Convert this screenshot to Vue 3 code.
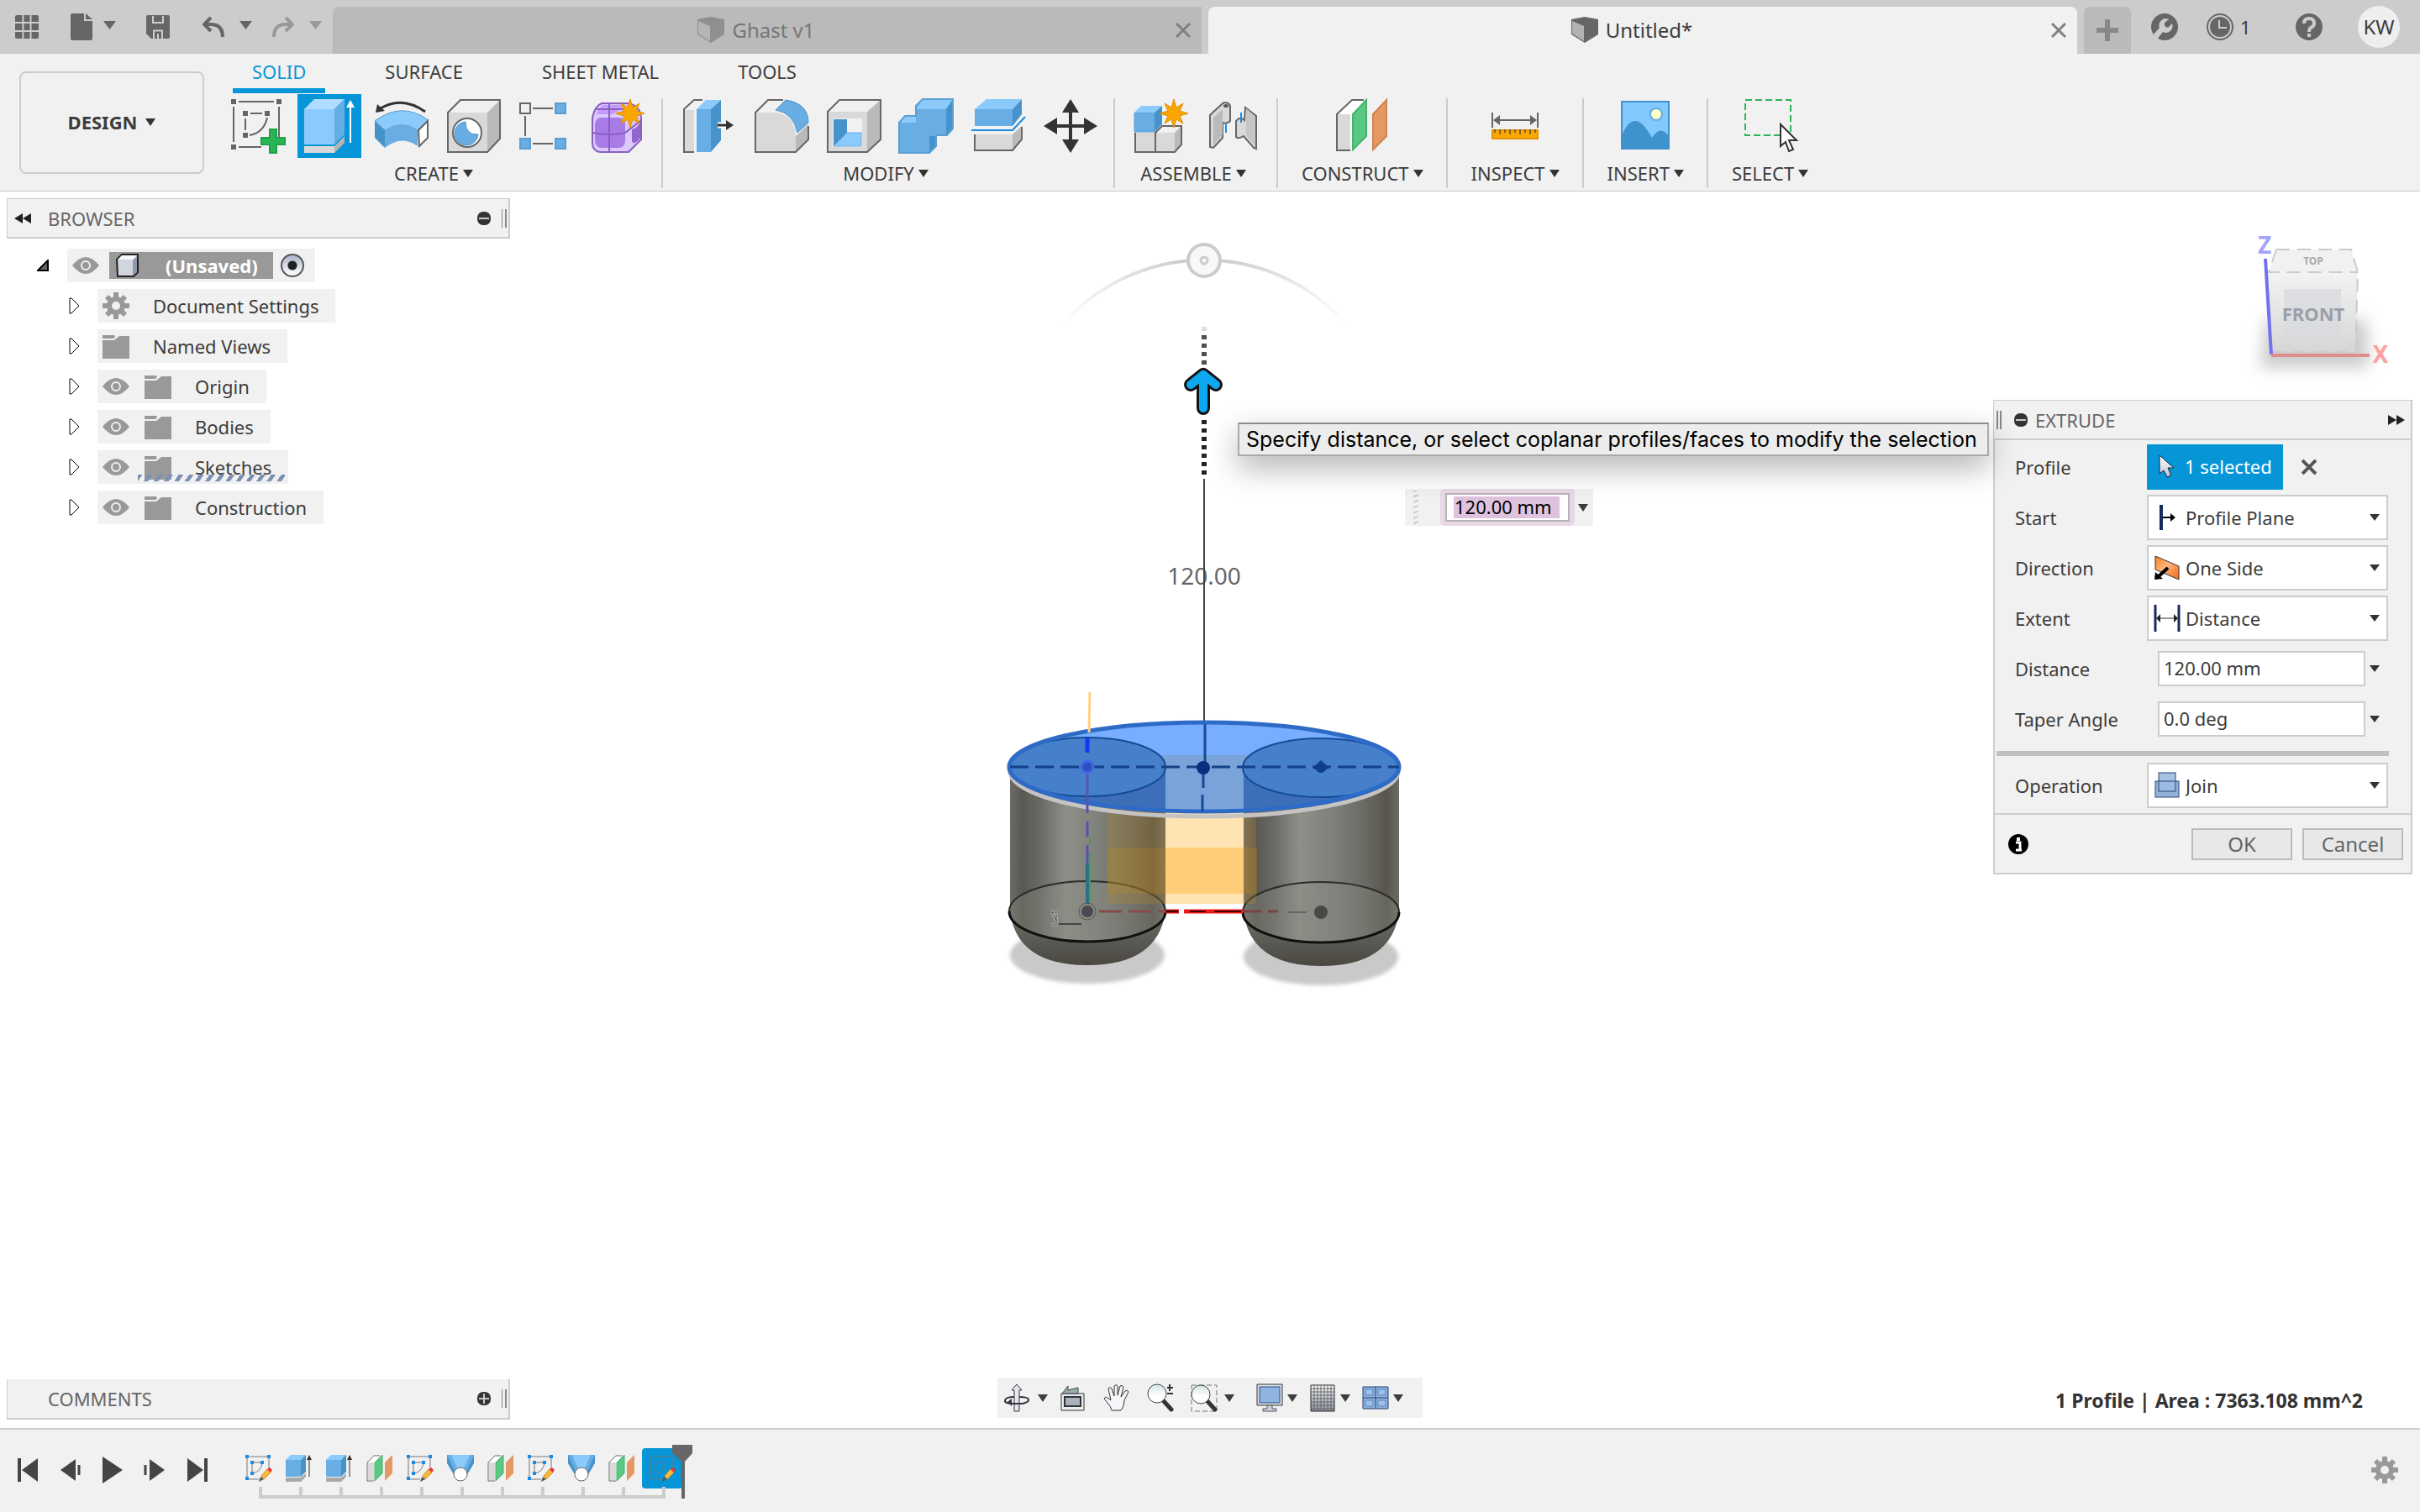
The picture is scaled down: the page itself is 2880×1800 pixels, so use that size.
<script setup>
import { ref } from 'vue'

const distance = ref('120.00 mm')
const taper = ref('0.0 deg')

const ribbonTabs = ['SOLID', 'SURFACE', 'SHEET METAL', 'TOOLS']
const activeTab = ref('SOLID')

const groups = [
  { label: 'CREATE', tools: ['sketch', 'extrude', 'revolve', 'hole', 'pattern', 'form'] },
  { label: 'MODIFY', tools: ['presspull', 'fillet', 'shell', 'combine', 'split', 'move'] },
  { label: 'ASSEMBLE', tools: ['component', 'joint'] },
  { label: 'CONSTRUCT', tools: ['plane'] },
  { label: 'INSPECT', tools: ['measure'] },
  { label: 'INSERT', tools: ['image'] },
  { label: 'SELECT', tools: ['select'] },
]

const nodes = [
  { label: 'Document Settings', icons: ['gear'] },
  { label: 'Named Views', icons: ['folder'] },
  { label: 'Origin', icons: ['eye', 'folder'] },
  { label: 'Bodies', icons: ['eye', 'folder'] },
  { label: 'Sketches', icons: ['eye', 'folder'], pending: true },
  { label: 'Construction', icons: ['eye', 'folder'] },
]

const selects = [
  { id: 'start', label: 'Start', value: 'Profile Plane', icon: 'fromplane' },
  { id: 'direction', label: 'Direction', value: 'One Side', icon: 'oneside' },
  { id: 'extent', label: 'Extent', value: 'Distance', icon: 'span' },
]

const playback = ['first', 'prev', 'play', 'next', 'last']
const features = ['t-sketch', 't-extrude', 't-extrude', 't-plane', 't-sketch', 't-loft', 't-plane', 't-sketch', 't-loft', 't-plane', 't-sketch']

const navTools = [
  { icon: 'orbit', menu: true },
  { icon: 'lookat' },
  { icon: 'pan' },
  { icon: 'zoom' },
  { icon: 'zoomwin', menu: true },
  { icon: 'display', menu: true, wide: true },
  { icon: 'grid', menu: true },
  { icon: 'views', menu: true },
]
</script>

<template>
  <div class="app">
    <svg class="defs" aria-hidden="true">
      <defs>
        <linearGradient id="g-steel" x1="0" x2="1" y1="0" y2="0">
          <stop offset="0" stop-color="#6c6c66" /><stop offset=".08" stop-color="#5a5852" />
          <stop offset=".2" stop-color="#6a6b66" /><stop offset=".36" stop-color="#8d8f88" />
          <stop offset=".6" stop-color="#7c7e78" /><stop offset=".78" stop-color="#6a6a64" />
          <stop offset=".92" stop-color="#58554e" /><stop offset="1" stop-color="#6e6c66" />
        </linearGradient>
        <linearGradient id="g-bowl" x1="0" x2="0" y1="0" y2="1">
          <stop offset="0" stop-color="#6e6f69" /><stop offset="1" stop-color="#4a4741" />
        </linearGradient>
        <linearGradient id="g-arc" x1="0" x2="1" y1="0" y2="0">
          <stop offset="0" stop-color="#ccc" stop-opacity="0" /><stop offset=".4" stop-color="#cfcfcf" />
          <stop offset=".6" stop-color="#cfcfcf" /><stop offset="1" stop-color="#ccc" stop-opacity="0" />
        </linearGradient>
        <linearGradient id="g-cube" x1="0" x2="0" y1="0" y2="1">
          <stop offset="0" stop-color="#f3f3f3" /><stop offset="1" stop-color="#d6d6d6" />
        </linearGradient>
        <linearGradient id="g-ball" x1="0" x2="0" y1="0" y2="1">
          <stop offset="0" stop-color="#fff" /><stop offset="1" stop-color="#b9c3d6" />
        </linearGradient>
        <linearGradient id="g-orange" x1="0" x2="1" y1="0" y2="1">
          <stop offset="0" stop-color="#f58220" /><stop offset=".45" stop-color="#ffb580" /><stop offset="1" stop-color="#f0650f" />
        </linearGradient>
        <linearGradient id="g-grid" x1="0" x2="0" y1="0" y2="1">
          <stop offset="0" stop-color="#fff" /><stop offset="1" stop-color="#8790a4" />
        </linearGradient>
        <linearGradient id="g-lens" x1="0" x2="0" y1="0" y2="1">
          <stop offset="0" stop-color="#cfe6e6" /><stop offset=".6" stop-color="#fff" />
        </linearGradient>
        <filter id="f-soft" x="-30%" y="-50%" width="160%" height="200%"><feGaussianBlur stdDeviation="9" /></filter>
        <filter id="f-edge" x="-10%" y="-10%" width="120%" height="120%"><feGaussianBlur stdDeviation="2" /></filter>
      </defs>

      <symbol id="caret" viewBox="0 0 12 10" preserveAspectRatio="none"><path d="M0 0H12L6 10Z" fill="currentColor" /></symbol>
      <symbol id="cross" viewBox="0 0 18 18"><path d="M1 1 17 17M17 1 1 17" stroke="currentColor" stroke-width="3" /></symbol>
      <symbol id="cross-bold" viewBox="0 0 18 18"><path d="M1 1 17 17M17 1 1 17" stroke="currentColor" stroke-width="4" /></symbol>
      <symbol id="cube" viewBox="0 0 32 32">
        <path d="M0 3 16 0 32 3V21L16 31 0 21Z" fill="#666" /><path d="M1 5 15 11V29L1 20Z" fill="#b0b3b2" />
      </symbol>
      <symbol id="apps" viewBox="0 0 28 28">
        <g fill="#666"><rect width="28" height="28" rx="2" /></g>
        <path d="M0 9H28M0 19H28M9.500 0V28M18.500 0V28" stroke="#ccc" stroke-width="2" />
      </symbol>
      <symbol id="file" viewBox="0 0 26 32"><path d="M2 0H16V9H26V30Q26 32 24 32H2Q0 32 0 30V2Q0 0 2 0ZM18 0 26 7H18Z" fill="#666" /></symbol>
      <symbol id="save" viewBox="0 0 28 28">
        <path d="M2 0H26Q28 0 28 2V26Q28 28 26 28H6L0 22V2Q0 0 2 0Z" fill="#666" />
        <path d="M8 1V9H20V1M9 28V18.500H19V28" fill="none" stroke="#ccc" stroke-width="2" /><path d="M14 22V28" stroke="#ccc" stroke-width="2" />
      </symbol>
      <symbol id="undo" viewBox="0 0 26 26"><path d="M10 2 2 10 10 18M3 10H10Q24 10 24 25" fill="none" stroke="currentColor" stroke-width="4" /></symbol>
      <symbol id="redo" viewBox="0 0 26 26"><path d="M16 2 24 10 16 18M23 10H16Q2 10 2 25" fill="none" stroke="currentColor" stroke-width="4" /></symbol>
      <symbol id="wrench" viewBox="0 0 32 32">
        <circle cx="16" cy="16" r="16" fill="#666" />
        <path d="M21 7A8 8 0 0 0 10 17L2 26 7 31 14 22A8 8 0 0 0 25 12L20 17 16 15V11Z" fill="#ccc" />
      </symbol>
      <symbol id="clock" viewBox="0 0 32 32">
        <circle cx="16" cy="16" r="15" fill="none" stroke="#666" stroke-width="2" /><circle cx="16" cy="16" r="12" fill="#666" />
        <path d="M15 8V17H24" fill="none" stroke="#ccc" stroke-width="2" />
      </symbol>
      <symbol id="help" viewBox="0 0 32 32">
        <circle cx="16" cy="16" r="16" fill="#666" />
        <path d="M10 12Q10 6 16 6T22 12Q22 15 18 17Q16 18 16 22" fill="none" stroke="#ccc" stroke-width="4" /><rect x="14" y="24" width="4" height="4" fill="#ccc" />
      </symbol>
      <symbol id="star" viewBox="0 0 34 34">
        <path d="M17 0 20 10 28 5 24 14 34 17 24 20 28 29 20 24 17 34 14 24 6 29 10 20 0 17 10 14 6 5 14 10Z" fill="#f9a602" stroke="#e08e00" />
      </symbol>

      <symbol id="sketch" viewBox="0 0 76 76">
        <path d="M16 9H58M64 15V58M10 15V57M16 63H43M30 23H44M24 29V43M50 28Q46 46 29 49" fill="none" stroke="#666" stroke-width="2" />
        <path d="M7 6h6v6h-6zM61 6h6v6h-6zM7 60h6v6h-6zM21 20h6v6h-6zM47 20h6v6h-6zM21 46h6v6h-6z" fill="#666" />
        <path d="M53 42H61V52H71V60H61V70H53V60H43V52H53Z" fill="#29b554" stroke="#1fa247" stroke-width="2" />
      </symbol>
      <symbol id="extrude" viewBox="0 0 76 76">
        <path d="M8 18H44V60H8Z" fill="#8acbfb" /><path d="M8 18 20 6H56L44 18Z" fill="#b0dcff" /><path d="M44 18 56 6V48L44 60Z" fill="#64aee6" />
        <path d="M8 62H44V70H8Z" fill="#d9d9d9" /><path d="M44 62 56 50V58L44 70Z" fill="#b5b5b5" />
        <path d="M63 58V14" stroke="#fff" stroke-width="2" /><path d="M58 16 63 7 68 16Z" fill="#fff" />
      </symbol>
      <symbol id="revolve" viewBox="0 0 76 76">
        <path d="M11 18Q38 1 66 21" fill="none" stroke="#333" stroke-width="3" /><path d="M7 22 9 12 18 20Z" fill="#333" />
        <path d="M6 32Q38 8 70 31L57 43Q38 30 18 43Z" fill="#8acbfb" stroke="#5b9fd0" /><path d="M18 43Q38 30 57 43V62Q38 48 18 64Z" fill="#68aee4" />
        <path d="M6 32 18 43V64L6 52Z" fill="#4693cb" /><path d="M58 43 69 32V52L59 62Z" fill="#fff" stroke="#666" stroke-width="2" />
      </symbol>
      <symbol id="hole" viewBox="0 0 76 76">
        <path d="M7 22H54V69H7Z" fill="#d9d9d9" /><path d="M7 22 22 7H69L54 22Z" fill="#f1f1f1" /><path d="M54 22 69 7V53L54 69Z" fill="#bababa" />
        <path d="M7 22 22 7H69V53L54 69H7Z" fill="none" stroke="#666" stroke-width="2" />
        <circle cx="30" cy="46" r="17" fill="#fff" stroke="#666" stroke-width="2" />
        <path d="M28 33Q28 49 43 48A14 14 0 1 1 28 33Z" fill="#68aee4" stroke="#4693cb" />
      </symbol>
      <symbol id="pattern" viewBox="0 0 76 76">
        <path d="M22 17H46M22 59H46M13 26V50" stroke="#666" stroke-width="2" /><rect x="7" y="11" width="12" height="12" fill="#f1f1f1" stroke="#666" stroke-width="2" />
        <g fill="#68aee4" stroke="#5b9fd0" stroke-width="2"><rect x="49" y="11" width="12" height="12" /><rect x="7" y="53" width="12" height="12" /><rect x="49" y="53" width="12" height="12" /></g>
      </symbol>
      <symbol id="form" viewBox="0 0 76 76">
        <path d="M18 11H48Q65 13 65 30V54L50 69H16Q7 68 7 58V28Q10 14 18 11Z" fill="#dcc8fa" stroke="#8a5fc0" stroke-width="2" />
        <path d="M20 13H44Q38 22 30 24H12Q14 16 20 13Z" fill="#c39bff" /><rect x="10" y="28" width="36" height="36" rx="8" fill="#a87be6" />
        <path d="M54 42Q62 40 64 32V52Q56 62 54 56Z" fill="#9165cc" /><path d="M27 11V68M7 46Q30 50 46 46L64 32M12 18H48" fill="none" stroke="#8a5fc0" stroke-width="2" />
        <use href="#star" x="35" y="6" width="34" height="34" />
      </symbol>
      <symbol id="presspull" viewBox="0 0 76 76">
        <path d="M20 69H8V18L20 7H30" fill="#f1f1f1" stroke="#666" stroke-width="2" /><path d="M9 19H20V68H9Z" fill="#d9d9d9" />
        <path d="M23 18H40V69H23Z" fill="#68aee4" /><path d="M23 18 34 7H52L40 18Z" fill="#8acbfb" /><path d="M40 18 52 7V55L40 69Z" fill="#4693cb" />
        <path d="M48 37H60" stroke="#fff" stroke-width="7" /><path d="M48 37H60" stroke="#333" stroke-width="3" /><path d="M58 31 67 37 58 43Z" fill="#333" />
      </symbol>
      <symbol id="fillet" viewBox="0 0 76 76">
        <path d="M7 22 22 7H42L70 40V55L55 69H7Z" fill="#f1f1f1" /><path d="M7 22H30Q52 24 55 48V69H7Z" fill="#d9d9d9" /><path d="M55 50 70 36V54L55 69Z" fill="#bababa" />
        <path d="M40 7H22L7 22V69H55L70 54V38" fill="none" stroke="#666" stroke-width="2" /><path d="M43 7Q70 11 70 34L57 46Q52 22 31 19Z" fill="#68aee4" stroke="#4693cb" />
      </symbol>
      <symbol id="shell" viewBox="0 0 76 76">
        <path d="M7 21H54V69H7Z" fill="#d9d9d9" /><path d="M7 21 21 7H70L54 21Z" fill="#f1f1f1" /><path d="M54 21 70 7V54L54 69Z" fill="#bababa" />
        <path d="M7 21 21 7H70V54L54 69H7Z" fill="none" stroke="#666" stroke-width="2" />
        <path d="M13 29H48V63H13Z" fill="#f1f1f1" /><path d="M14 30H30V46L14 62Z" fill="#4693cb" /><path d="M14 62 30 46H47V62Z" fill="#8acbfb" stroke="#68aee4" />
      </symbol>
      <symbol id="combine" viewBox="0 0 76 76">
        <path d="M6 34 13 26H26V14L34 6H70V41L63 49H50V62L42 70H6Z" fill="#68aee4" /><path d="M26 18 34 6H70L62 18ZM6 34 13 26H26V34Z" fill="#8acbfb" />
        <path d="M62 18 70 6V41L62 49ZM42 50H50V62L42 70Z" fill="#4693cb" /><path d="M6 34 13 26H26V14L34 6H70V41L63 49H50V62L42 70H6Z" fill="none" stroke="#5b9fd0" stroke-width="2" />
      </symbol>
      <symbol id="split" viewBox="0 0 76 76">
        <path d="M10 18H55V38H10Z" fill="#68aee4" /><path d="M10 18 24 6H66L55 18Z" fill="#8acbfb" /><path d="M55 18 66 6V24L55 38Z" fill="#4693cb" />
        <path d="M6 43H55L70 27" fill="none" stroke="#1a8ae5" stroke-width="2" /><path d="M10 48H55V67H10Z" fill="#d9d9d9" /><path d="M55 48 66 38V54L55 67Z" fill="#bababa" />
        <path d="M10 48V67H55L66 54V39" fill="none" stroke="#666" stroke-width="2" />
      </symbol>
      <symbol id="move" viewBox="0 0 76 76">
        <path d="M38 16V60M16 38H60" stroke="#333" stroke-width="4" /><path d="M38 6 48 22H28ZM38 70 48 54H28ZM6 38 22 28V48ZM70 38 54 28V48Z" fill="#333" />
      </symbol>
      <symbol id="component" viewBox="0 0 76 76">
        <path d="M7 46H31V69H7ZM31 46H54V69H31Z" fill="#d9d9d9" /><path d="M31 46 39 38H62L54 46Z" fill="#f1f1f1" /><path d="M54 46 62 38V60L54 69Z" fill="#bababa" />
        <path d="M7 46V69H54L62 60V38H39L31 46V69" fill="none" stroke="#666" stroke-width="2" />
        <path d="M6 22H30V45H6Z" fill="#68aee4" stroke="#5b9fd0" /><path d="M6 22 14 14H39L30 22Z" fill="#8acbfb" /><path d="M30 22 39 14V36L30 45Z" fill="#4693cb" />
        <use href="#star" x="36" y="6" width="34" height="34" />
      </symbol>
      <symbol id="joint" viewBox="0 0 76 76">
        <path d="M10 25 24 12Q28 8 33 12L34 14V32Q30 36 25 34V52L14 64 10 63Z" fill="#d9d9d9" stroke="#666" stroke-width="2" /><path d="M14 28 25 18V48L14 61Z" fill="#bababa" /><ellipse cx="29" cy="14" rx="3" ry="2" fill="#555" />
        <path d="M52 16 65 26V65L62 64 50 50Q44 54 41 51V32Q46 26 51 31Z" fill="#d9d9d9" stroke="#666" stroke-width="2" /><path d="M53 17 64 27V62L53 49Z" fill="#c6c6c6" />
        <path d="M29 36V46M47 22V34" stroke="#1a8ae5" stroke-width="2" />
      </symbol>
      <symbol id="plane" viewBox="0 0 76 76">
        <path d="M24 67H8V24L26 7H40" fill="#fff" stroke="#666" stroke-width="2" /><path d="M9 24H24V66H9Z" fill="#d9d9d9" />
        <path d="M27 24 43 7V50L27 66Z" fill="#5ac882" stroke="#45b36c" stroke-width="2" /><path d="M51 24 67 7V50L51 66Z" fill="#e59863" stroke="#cf8450" stroke-width="2" />
      </symbol>
      <symbol id="measure" viewBox="0 0 76 76">
        <path d="M11 22V40M65 22V40M16 31H60" stroke="#666" stroke-width="2" /><path d="M12 31 20 25V37ZM64 31 56 25V37Z" fill="#666" />
        <path d="M11 43H65V53H11Z" fill="#fba800" stroke="#e39400" stroke-width="2" /><path d="M14 42V46M20 42V48M26 42V46M32 42V48M38 42V46M44 42V48M50 42V46M56 42V48M62 42V46" stroke="#806020" stroke-width="2" />
      </symbol>
      <symbol id="image" viewBox="0 0 76 76">
        <path d="M10 9H66V65H10Z" fill="#82c9ff" stroke="#3f92cc" stroke-width="2" /><circle cx="51" cy="24" r="7" fill="#ffffcc" stroke="#64aee0" stroke-width="2" />
        <path d="M10 50Q17 32 26 32T46 52Q56 36 66 50V66H10Z" fill="#3f92cc" />
      </symbol>
      <symbol id="select" viewBox="0 0 76 76">
        <path d="M8 7H62V49H8Z" fill="none" stroke="#2bb558" stroke-width="2" stroke-dasharray="8 4" />
        <path d="M50 36V62L56 57 60 68 65 66 60 55H69Z" fill="#fff" stroke="#333" stroke-width="2" />
      </symbol>

      <symbol id="rewind" viewBox="0 0 20 12"><path d="M10 0V12L0 6ZM20 0V12L10 6Z" fill="#222" /></symbol>
      <symbol id="minus" viewBox="0 0 18 18"><rect x="1" y="1" width="16" height="16" rx="7" fill="#333" /><path d="M3 9H15" stroke="#ccc" stroke-width="2" /></symbol>
      <symbol id="plus" viewBox="0 0 18 18"><rect x="1" y="1" width="16" height="16" rx="7" fill="#333" /><path d="M3 9H15M9 3V15" stroke="#ccc" stroke-width="2" /></symbol>
      <symbol id="open" viewBox="0 0 14 14"><path d="M1 13 13 1V13Z" fill="#666" stroke="#000" stroke-width="2" /></symbol>
      <symbol id="closed" viewBox="0 0 14 20"><path d="M1 1H3L12 10 3 19H1Z" fill="#fff" stroke="#000" /></symbol>
      <symbol id="eye" viewBox="0 0 32 32"><path d="M0 16Q16-4 32 16Q16 36 0 16Z" fill="#999" /><circle cx="16" cy="16" r="5" fill="none" stroke="#eee" stroke-width="2" /></symbol>
      <symbol id="folder" viewBox="0 0 32 32"><path d="M0 3H14L15 5 13 7H0ZM0 9H14L20 4H32V31H0Z" fill="#999" /></symbol>
      <symbol id="gear" viewBox="0 0 32 32">
        <g stroke="#999" stroke-width="6"><path d="M16 0V32M0 16H32M5 5 27 27M27 5 5 27" /></g><circle cx="16" cy="16" r="11" fill="#999" /><circle cx="16" cy="16" r="5" fill="#f1f1f1" />
      </symbol>
      <symbol id="body" viewBox="0 0 28 28"><path d="M1 7 7 1H26V22L21 27H2Z" fill="#d0d5de" stroke="#222" stroke-width="2" /><path d="M2 7 7 2H25L20 7Z" fill="#f6f8fa" /><path d="M20 8 25 3V22L20 26Z" fill="#8f98a8" /></symbol>

      <symbol id="arrow" viewBox="0 0 20 28"><path d="M2 1V23L7 19 11 27 16 25 12 16H19Z" fill="url(#g-ball)" stroke="#123" stroke-width="1" /></symbol>
      <symbol id="fromplane" viewBox="0 0 32 32"><path d="M9 1V31" stroke="#152c5b" stroke-width="4" /><path d="M11 16H21" stroke="#000" stroke-width="2" /><path d="M20 11 26 16 20 21Z" /></symbol>
      <symbol id="oneside" viewBox="0 0 32 32"><path d="M2 2 30 14V30L2 18Z" fill="url(#g-orange)" stroke="#333" /><path d="M17 16 6 26" stroke="#000" stroke-width="4" /><path d="M1 30 2 21 11 29Z" /></symbol>
      <symbol id="span" viewBox="0 0 32 32"><path d="M2 0V32M30 0V32" stroke="#152c5b" stroke-width="3" /><path d="M6 16H26" stroke="#234" stroke-width="1" /><path d="M3 16 8 11V21ZM29 16 24 11V21Z" fill="#222" /></symbol>
      <symbol id="join" viewBox="0 0 32 32"><g stroke="#2d466f" stroke-width="1"><rect x="2" y="11" width="28" height="19" fill="#93b3dc" /><rect x="6" y="1" width="20" height="22" fill="#9bbbe2" fill-opacity=".9" /><path d="M6 11H26" /></g></symbol>
      <symbol id="info" viewBox="0 0 24 24"><circle cx="12" cy="12" r="12" /><path d="M9 10H14V18M9 19H16" fill="none" stroke="#fff" stroke-width="3" /><rect x="10" y="4" width="4" height="4" fill="#fff" /></symbol>

      <symbol id="orbit" viewBox="0 0 32 34">
        <path d="M12 33V8H9L15 1 21 8H18V33Z" fill="#e4e8ec" stroke="#334" /><path d="M12 16Q2 16 1 20T12 24H22Q30 22 29 19T18 16" fill="none" stroke="#334" stroke-width="2" /><path d="M4 22 9 18V27Z" fill="#334" />
      </symbol>
      <symbol id="lookat" viewBox="0 0 32 34"><path d="M2 12H29V32H2Z" fill="#eceef2" stroke="#333" /><path d="M3 12 10 3V8L22 5V12Z" fill="#9aa" stroke="#444" /><rect x="6" y="16" width="19" height="11" fill="#aab0bd" stroke="#333" stroke-width="2" /></symbol>
      <symbol id="pan" viewBox="0 0 32 34">
        <path d="M10 32Q9 27 5 23L1 18Q2 15 5 17L9 20 6 6Q8 3 10 6L13 15 13 3Q15 0 17 3V14L20 3Q23 1 24 5L21 16 26 9Q29 7 30 10L25 20Q25 28 21 32Z" fill="#f6f6fa" stroke="#333" />
      </symbol>
      <symbol id="zoom" viewBox="0 0 32 34"><path d="M19 20 29 31" stroke="#333" stroke-width="5" stroke-linecap="round" /><circle cx="12" cy="12" r="11" fill="url(#g-lens)" stroke="#444" /><path d="M24 5H31M27 1V9M24 12H31" stroke="#333" stroke-width="2" /></symbol>
      <symbol id="zoomwin" viewBox="0 0 32 34"><path d="M1 2H31V33H1Z" fill="none" stroke="#777" stroke-dasharray="6 3" /><path d="M19 20 29 31" stroke="#333" stroke-width="5" stroke-linecap="round" /><circle cx="12" cy="13" r="11" fill="url(#g-lens)" stroke="#444" /></symbol>
      <symbol id="display" viewBox="0 0 32 34"><path d="M1 1H31V26H1Z" fill="#dde2ea" stroke="#333" /><rect x="4" y="4" width="24" height="19" fill="#90b4e0" stroke="#2d4f86" /><path d="M13 26H19V30H24V33H8V30H13Z" fill="#ccd2dc" stroke="#555" /></symbol>
      <symbol id="grid" viewBox="0 0 32 34"><path d="M2 2H30V33H2Z" fill="url(#g-grid)" stroke="#222" /><path d="M6 2V33M10 2V33M14 2V33M18 2V33M22 2V33M26 2V33M2 6H30M2 10H30M2 14H30M2 18H30M2 22H30M2 26H30M2 30H30" stroke="#666" stroke-width="1" /></symbol>
      <symbol id="views" viewBox="0 0 32 34"><path d="M1 4H31V30H1Z" fill="#8db2df" stroke="#24416f" stroke-width="1" /><path d="M16 4V30M1 17H31" stroke="#24416f" stroke-width="1" /><path d="M4 7H13V14H4ZM19 7H28V14H19ZM4 20H13V27H4ZM19 20H28V27H19Z" fill="#9cc0ea" stroke="#5d84b8" /></symbol>

      <symbol id="first" viewBox="0 0 26 32"><path d="M2 2V30" stroke="#444" stroke-width="4" /><path d="M24 2V30L5 16Z" fill="#444" /></symbol>
      <symbol id="prev" viewBox="0 0 26 32"><path d="M19 3V29L1 16Z" fill="#444" /><path d="M23 10V22" stroke="#444" stroke-width="3" /></symbol>
      <symbol id="play" viewBox="0 0 26 32"><path d="M1 0V32L25 16Z" fill="#444" /></symbol>
      <symbol id="next" viewBox="0 0 26 32"><path d="M7 3V29L25 16Z" fill="#444" /><path d="M2 10V22" stroke="#444" stroke-width="3" /></symbol>
      <symbol id="last" viewBox="0 0 26 32"><path d="M24 2V30" stroke="#444" stroke-width="4" /><path d="M2 2V30L21 16Z" fill="#444" /></symbol>
      <symbol id="t-sketch" viewBox="0 0 32 32">
        <path d="M3 2H28V18M2 4V29H16M9 9H20M8 10V22M20 10Q18 20 9 22" fill="none" stroke="#777" stroke-width="1" />
        <path d="M0 0h4v4h-4zM26 0h4v4h-4zM0 26h4v4h-4zM6 7h4v4h-4zM18 7h4v4h-4zM6 20h4v4h-4z" fill="#1a8ae5" />
        <path d="M19 25 26 17 30 21 22 29Z" fill="#fbb938" stroke="#c98f26" /><path d="M26 17 29 15 32 18 30 21Z" fill="#e8343b" /><path d="M16 32 18 26 22 29Z" fill="#555" />
      </symbol>
      <symbol id="t-extrude" viewBox="0 0 32 32">
        <path d="M0 6H18V26H0Z" fill="#68aee4" /><path d="M0 6 6 0H24L18 6Z" fill="#8acbfb" /><path d="M18 6 24 0V20L18 26Z" fill="#4693cb" />
        <path d="M0 27H18L24 22V26L18 32H0Z" fill="#aaa" /><path d="M28 26V4" stroke="#333" /><path d="M25 6 28 0 31 6Z" fill="#333" />
      </symbol>
      <symbol id="t-plane" viewBox="0 0 32 32">
        <path d="M9 31H1V9L9 1H16" fill="#fff" stroke="#666" /><path d="M2 9H9V30H2Z" fill="#d9d9d9" /><path d="M10 9 19 0V22L10 31Z" fill="#5ac882" stroke="#45b36c" /><path d="M22 9 31 0V22L22 31Z" fill="#e59863" />
      </symbol>
      <symbol id="t-loft" viewBox="0 0 32 32">
        <path d="M0 0H32V10L20 30H12L0 10Z" fill="#4693cb" /><path d="M0 0H32L22 22H10Z" fill="#68aee4" /><path d="M5 0H27L20 16H12Z" fill="#8acbfb" /><circle cx="16" cy="23" r="8" fill="#fff" stroke="#666" />
      </symbol>
    </svg>

    <header class="titlebar">
      <div class="quick">
        <button class="ic apps" aria-label="Data panel"><svg><use href="#apps" /></svg></button>
        <button class="ic file" aria-label="File"><svg><use href="#file" /></svg><svg class="dd"><use href="#caret" /></svg></button>
        <button class="ic save" aria-label="Save"><svg><use href="#save" /></svg></button>
        <button class="ic history" aria-label="Undo"><svg><use href="#undo" /></svg><svg class="dd"><use href="#caret" /></svg></button>
        <button class="ic history off" aria-label="Redo"><svg><use href="#redo" /></svg><svg class="dd"><use href="#caret" /></svg></button>
      </div>
      <nav class="docs">
        <div class="doc">
          <a href="#ghast"><svg><use href="#cube" /></svg>Ghast v1</a>
          <button class="ic x" aria-label="Close Ghast v1"><svg><use href="#cross" /></svg></button>
        </div>
        <div class="doc current">
          <a href="#untitled"><svg><use href="#cube" /></svg>Untitled*</a>
          <button class="ic x" aria-label="Close Untitled"><svg><use href="#cross" /></svg></button>
        </div>
      </nav>
      <div class="account">
        <button class="new" aria-label="New design"></button>
        <button class="ic round" aria-label="Extensions"><svg><use href="#wrench" /></svg></button>
        <button class="ic round jobs"><svg><use href="#clock" /></svg>1</button>
        <button class="ic round" aria-label="Help"><svg><use href="#help" /></svg></button>
        <button class="avatar">KW</button>
      </div>
    </header>

    <section class="ribbon">
      <button class="workspace">DESIGN<svg><use href="#caret" /></svg></button>
      <div class="tools">
        <nav class="tabs">
          <button v-for="t in ribbonTabs" :key="t" :class="{ on: t === activeTab }" @click="activeTab = t">{{ t }}</button>
        </nav>
        <div class="groups">
          <div v-for="g in groups" :key="g.label" class="group" :class="{ single: g.tools.length === 1 }">
            <div class="icons">
              <button v-for="t in g.tools" :key="t" class="tool" :class="{ on: t === 'extrude' }" :aria-label="t">
                <svg><use :href="'#' + t" /></svg>
              </button>
            </div>
            <button class="caption">{{ g.label }}<svg><use href="#caret" /></svg></button>
          </div>
        </div>
      </div>
    </section>

    <main class="viewport">
      <div class="side">
        <div class="browser">
          <div class="panel-head">
            <svg class="rewind"><use href="#rewind" /></svg>
            <h2>BROWSER</h2>
            <svg class="dot"><use href="#minus" /></svg>
            <i class="grip"></i>
          </div>
          <ul class="tree">
            <li class="root">
              <svg class="twist open"><use href="#open" /></svg>
              <div class="node">
                <svg><use href="#eye" /></svg>
                <span class="sel"><svg><use href="#body" /></svg>(Unsaved)</span>
                <input type="radio" checked aria-label="Activate (Unsaved)" />
              </div>
            </li>
            <li v-for="n in nodes" :key="n.label">
              <svg class="twist"><use href="#closed" /></svg>
              <div class="node">
                <svg v-for="i in n.icons" :key="i"><use :href="'#' + i" /></svg>
                <span>{{ n.label }}</span>
                <i v-if="n.pending" class="hatch"></i>
              </div>
            </li>
          </ul>
        </div>
        <div class="panel-head comments">
          <h2>COMMENTS</h2>
          <svg class="dot"><use href="#plus" /></svg>
          <i class="grip"></i>
        </div>
      </div>

      <div class="center">
        <svg class="scene" viewBox="0 0 560 972">
          <path d="M104 159A224 224 0 0 1 443 159" fill="none" stroke="url(#g-arc)" stroke-width="4" />
          <circle cx="273" cy="82" r="19" fill="#f7f8f8" stroke="#ccc" stroke-width="4" /><circle cx="273" cy="82" r="4" fill="none" stroke="#ccc" stroke-width="3" />
          <g stroke="#222" stroke-width="6"><path d="M273 171V209" stroke-dasharray="5 5" stroke-opacity=".8" /><path d="M273 161V166" stroke-opacity=".15" /><path d="M273 272V342" stroke-dasharray="5 5" /></g>
          <g fill="none" stroke-linecap="round" stroke-linejoin="round">
            <path d="M272 258V219M257 230 272 218 287 230" stroke="#111" stroke-width="16" /><path d="M272 258V219M257 230 272 218 287 230" stroke="#0ea8f0" stroke-width="10" />
          </g>
          <text x="273" y="468" text-anchor="middle" font-size="28" fill="#666">120.00</text>
          <path d="M273 342V632" stroke="#444" stroke-width="2" />

          <g fill="#c9c9c9" filter="url(#f-edge)"><ellipse cx="134" cy="909" rx="92" ry="34" /><ellipse cx="412" cy="911" rx="92" ry="34" /></g>
          <rect x="158" y="671" width="177" height="177" fill="#ffc766" fill-opacity=".5" />
          <rect x="158" y="781" width="178" height="55" fill="#ffb83d" fill-opacity=".5" />
          <g id="leg">
            <path d="M42 857Q50 921 134 921T227 857Z" fill="url(#g-bowl)" />
            <path d="M42 685V857A92 36 0 0 0 227 857V685Z" fill="url(#g-steel)" />
            <ellipse cx="134" cy="857" rx="93" ry="36" fill="#8b8d86" fill-opacity=".3" stroke="#2c2c2a" stroke-width="2" />
            <path d="M41 857A93 36 0 0 0 227 857" fill="none" stroke="#111" stroke-width="3" />
          </g>
          <use href="#leg" x="278" y="1" />
          <g fill="#c08a20" fill-opacity=".25"><rect x="158" y="700" width="69" height="148" /><rect x="158" y="781" width="69" height="55" /><rect x="320" y="700" width="15" height="148" /><rect x="320" y="781" width="16" height="55" /></g>
          <ellipse cx="273" cy="690" rx="231" ry="54" fill="none" stroke="#c6c4c2" stroke-width="5" />
          <ellipse cx="273" cy="685" rx="232" ry="53" fill="#78adff" />
          <path d="M158 671H335V732Q273 740 158 730Z" fill="#7aa3da" />
          <path d="M134 650 41 685Q60 722 158 734L227 738V685ZM412 650 505 685Q486 722 388 734L320 738V685Z" fill="#3c6fb8" />
          <g fill="#4680cb" stroke="#174a96" stroke-width="2"><ellipse cx="134" cy="685" rx="93" ry="35" /><ellipse cx="412" cy="686" rx="93" ry="35" /></g>
          <ellipse cx="273" cy="685" rx="232" ry="53" fill="none" stroke="#2e6bc6" stroke-width="5" />
          <path d="M42 685H505" stroke="#134189" stroke-width="3" stroke-dasharray="22 8" /><path d="M274 634V685M272 690V710M271 718V738" stroke="#174a96" stroke-width="3" />
          <circle cx="272" cy="686" r="8" fill="#06307f" /><path d="M402 686 412 677 422 686 412 692Z" fill="#123f8d" /><circle cx="412" cy="686" r="6" fill="#123f8d" />
          <path d="M137 596 136 644" stroke="#ffd080" stroke-width="3" /><path d="M134 650V668" stroke="#1338f5" stroke-width="5" />
          <path d="M134 692V740M134 750V768M134 778V800" stroke="#5555b0" stroke-width="3" /><path d="M134 800V848" stroke="#2b7088" stroke-width="4" /><path d="M137 769V777M137 786V846" stroke="#4a9a55" stroke-width="2" />
          <circle cx="134" cy="685" r="7" fill="#2d4fc0" stroke="#4068e8" stroke-width="3" />
          <g stroke-width="5"><path d="M148 857H227" stroke="#8a4a4a" stroke-width="3" stroke-dasharray="27 8" /><path d="M227 857H243" stroke="#d01010" /><path d="M249 857H319" stroke="#f01818" /><path d="M319 857H361" stroke="#7c4444" stroke-width="3" stroke-dasharray="22 8" /></g>
          <path d="M228 857H242M256 857H275M285 857H317" stroke="#400" stroke-width="2" /><path d="M372 858H395" stroke="#666" stroke-width="2" />
          <circle cx="134" cy="857" r="10" fill="none" stroke="#555" /><circle cx="134" cy="857" r="7" fill="#4c4754" /><circle cx="412" cy="858" r="8" fill="#484846" />
          <path d="M100 872H127" fill="none" stroke="#444" stroke-width="2" /><path d="M90 858H99M90 873H99M92 858 97 868M97 860V872" fill="none" stroke="#bbb" stroke-width="3" /><path d="M90 858H99M90 873H99M92 858 97 868M97 860V872" fill="none" stroke="#444" stroke-width="1" />
        </svg>
        <div class="tip" role="tooltip">Specify distance, or select coplanar profiles/faces to modify the selection</div>
        <div class="hud">
          <i></i>
          <label><input v-model="distance" aria-label="Distance on canvas" /></label>
          <svg><use href="#caret" /></svg>
        </div>
        <div class="navbar">
          <button v-for="n in navTools" :key="n.icon" class="nav" :class="{ wide: n.wide, menu: n.menu }" :aria-label="n.icon">
            <svg><use :href="'#' + n.icon" /></svg>
            <svg v-if="n.menu" class="dd"><use href="#caret" /></svg>
          </button>
        </div>
      </div>

      <div class="right">
        <svg class="viewcube" viewBox="0 0 190 190">
          <path d="M36 110H156L160 168H30Z" fill="#999" fill-opacity=".5" filter="url(#f-soft)" />
          <path d="M49 27H138L146 54H40Z" fill="#f1f1f1" /><path d="M40 54H146L143 149H43Z" fill="url(#g-cube)" />
          <path d="M49 27H138L146 54 143 149M49 27 40 54H146M43 149H143" fill="none" stroke="#ccc" stroke-width="2" stroke-dasharray="16 9" />
          <path d="M58 74H126V134H60Z" fill="#d8dbe0" fill-opacity=".8" />
          <text x="93" y="45" font-size="12" font-weight="700" fill="#aaa" text-anchor="middle">TOP</text>
          <text x="93" y="112" font-size="22" font-weight="700" fill="#9a9fa6" text-anchor="middle">FRONT</text>
          <path d="M36 38 43 152" stroke="#7272ee" stroke-width="4" /><path d="M43 153H160" stroke="#e08d8d" stroke-width="4" />
          <text x="35" y="32" font-size="28" font-weight="700" fill="#a3a3ff" text-anchor="middle">Z</text>
          <text x="173" y="162" font-size="28" font-weight="700" fill="#ff9f9f" text-anchor="middle">X</text>
        </svg>

        <form class="dialog" @submit.prevent>
          <div class="dialog-head">
            <i class="grip left"></i>
            <svg class="dot"><use href="#minus" /></svg>
            <h2>EXTRUDE</h2>
            <svg class="rewind ff"><use href="#rewind" /></svg>
          </div>
          <div class="rows">
            <div class="row">
              <label for="profile">Profile</label>
              <button id="profile" type="button" class="picked"><svg><use href="#arrow" /></svg>1 selected</button>
              <button type="button" class="ic clear" aria-label="Clear selection"><svg><use href="#cross-bold" /></svg></button>
            </div>
            <div v-for="s in selects" :key="s.id" class="row">
              <label :for="s.id">{{ s.label }}</label>
              <div class="drop">
                <svg class="lead"><use :href="'#' + s.icon" /></svg>
                <select :id="s.id"><option>{{ s.value }}</option></select>
                <svg class="dd"><use href="#caret" /></svg>
              </div>
            </div>
            <div class="row">
              <label for="distance">Distance</label>
              <input id="distance" v-model="distance" /><svg class="dd"><use href="#caret" /></svg>
            </div>
            <div class="row">
              <label for="taper">Taper Angle</label>
              <input id="taper" v-model="taper" /><svg class="dd"><use href="#caret" /></svg>
            </div>
            <hr />
            <div class="row">
              <label for="operation">Operation</label>
              <div class="drop">
                <svg class="lead"><use href="#join" /></svg>
                <select id="operation"><option>Join</option></select>
                <svg class="dd"><use href="#caret" /></svg>
              </div>
            </div>
          </div>
          <div class="dialog-foot">
            <svg class="info"><use href="#info" /></svg>
            <button type="submit">OK</button>
            <button type="button">Cancel</button>
          </div>
        </form>

        <p class="status">1 Profile | Area : 7363.108 mm^2</p>
      </div>
    </main>

    <footer class="timeline">
      <div class="playback">
        <button v-for="p in playback" :key="p" class="ic" :aria-label="p"><svg><use :href="'#' + p" /></svg></button>
      </div>
      <div class="track">
        <div class="features">
          <button v-for="(f, i) in features" :key="i" class="feature" :class="{ on: i === features.length - 1 }" :aria-label="'Feature ' + (i + 1)">
            <svg><use :href="'#' + f" /></svg>
          </button>
        </div>
        <div class="rail"></div>
        <svg class="marker" viewBox="0 0 24 64"><path d="M0 0H24V10L15 20V64H11V20L0 10Z" fill="#666" /></svg>
      </div>
      <button class="ic settings" aria-label="Timeline settings"><svg><use href="#gear" /></svg></button>
    </footer>
  </div>
</template>

<style>
body { margin: 0; }
</style>

<style scoped>
.app {
  min-height: 100vh;
  display: flex;
  flex-direction: column;
  background: #fff;
  color: #3c3c3c;
  font: 22px/30px "Noto Sans", "Open Sans", sans-serif;
}
.defs { position: absolute; width: 0; height: 0; }
* { box-sizing: border-box; }
button, input, select { font: inherit; color: inherit; margin: 0; }
button { background: none; border: 0; padding: 0; }
svg { display: block; flex: none; }
h2, p, ul { margin: 0; padding: 0; font-weight: 400; font-size: 22px; }
ul { list-style: none; }
.ic { display: flex; align-items: center; }

/* title bar */
.titlebar { height: 64px; background: #ccc; display: flex; }
.quick { width: 396px; padding-left: 18px; display: flex; color: #666; }
.quick button { flex: none; }
.quick .dd { width: 15px; height: 10px; margin-bottom: 4px; }
.quick .off { color: #999; }
.apps { width: 28px; margin-right: 38px; }
.apps svg, .save svg { width: 28px; height: 28px; }
.file { width: 54px; margin-right: 36px; justify-content: space-between; }
.file svg:first-child { width: 26px; height: 32px; }
.save { width: 28px; margin-right: 39px; }
.history { width: 59px; margin-right: 24px; justify-content: space-between; }
.history svg:first-child { width: 26px; height: 26px; }
.docs { flex: 1; display: flex; padding-top: 8px; gap: 8px; }
.doc { flex: 1; display: flex; background: #bababa; border-radius: 8px 0 0 0; color: #777; font-size: 24px; }
.doc.current { background: #f1f1f1; border-radius: 8px 8px 0 0; color: #3c3c3c; }
.doc a { flex: 1; display: flex; align-items: center; justify-content: center; gap: 9px; color: inherit; text-decoration: none; padding-left: 18px; }
.doc a svg { width: 32px; height: 32px; }
.doc:not(.current) a svg { opacity: .5; }
.x { width: 44px; justify-content: center; color: #808080; }
.x svg { width: 18px; height: 18px; }
.account { display: flex; align-items: center; padding: 0 24px 0 8px; gap: 34px; }
.new { width: 56px; height: 56px; align-self: flex-end; background: linear-gradient(#888, #888) center / 26px 6px no-repeat, linear-gradient(#888, #888) center / 6px 26px no-repeat, #bababa; border-radius: 8px 8px 0 0; margin-right: -10px; }
.round svg { width: 32px; height: 32px; }
.jobs { width: 72px; gap: 8px; }
.avatar { width: 50px; height: 50px; border-radius: 50%; background: #eee; margin-left: 8px; font-size: 24px; }

/* ribbon */
.ribbon { background: #f1f1f1; height: 164px; border-bottom: 1px solid #ccc; display: flex; }
.workspace { width: 220px; height: 122px; margin: 21px 0 0 23px; padding-bottom: 2px; border: 2px solid #ccc; border-radius: 8px; font-weight: 700; display: flex; align-items: center; justify-content: center; gap: 10px; }
.workspace svg, .caption svg { width: 12px; height: 9px; color: #333; }
.tools { margin-left: 25px; }
.tabs { display: flex; gap: 48px; padding-left: 9px; height: 48px; }
.tabs button { padding: 6px 23px 0; height: 47px; border-bottom: 6px solid transparent; line-height: 30px; display: flex; }
.tabs .on { color: #0696d7; border-color: #0696d7; }
.groups { display: flex; }
.group { border-right: 2px solid #ccc; height: 107px; padding: 0 13px 0 17px; margin-top: 5px; display: flex; flex-direction: column; align-items: center; }
.group:first-child { padding-left: 0; }
.group:last-child { border: 0; }
.group.single { padding: 0 27px 0 28px; }
.icons { display: flex; gap: 10px; margin-top: -5px; }
.tool, .tool svg { width: 76px; height: 76px; }
.tool.on { background: #0696d7; }
.caption { display: flex; align-items: center; gap: 5px; margin-top: 3px; height: 30px; }
.group:not(.single) .caption { padding-right: 10px; }

/* viewport */
.viewport { flex: 1; display: grid; grid-template-columns: 1fr 560px 1fr; }
.side { padding: 8px 0 10px 8px; display: flex; flex-direction: column; justify-content: space-between; }
.panel-head { width: 599px; height: 48px; background: #f1f1f1; border: 1px solid #ccc; border-right-width: 2px; border-bottom-width: 2px; display: flex; align-items: center; color: #666; }
.panel-head h2 { flex: 1; padding-left: 48px; }
.rewind { width: 20px; height: 12px; margin: 0 -28px 0 8px; }
.dot { width: 18px; height: 18px; }
.grip { width: 6px; height: 22px; border: solid #888; border-width: 0 2px 0 1px; margin: 0 2px 0 12px; }
.comments { border-top: 0; }
.tree { padding-top: 12px; }
.tree li { display: flex; align-items: center; height: 40px; margin-bottom: 8px; padding-left: 74px; }
.tree .root { padding-left: 36px; }
.twist { width: 14px; height: 20px; margin-right: 20px; }
.twist.open { height: 14px; margin-right: 22px; }
.node { position: relative; height: 40px; background: #f1f1f1; display: flex; align-items: center; gap: 18px; padding: 0 18px 0 6px; }
.node > svg { width: 32px; height: 32px; }
.node > span:not(.sel) { margin-left: 10px; padding: 0 2px 1px 0; }
.root .node { gap: 12px; padding-right: 13px; }
.sel { background: #999; color: #fff; font-weight: 700; height: 32px; display: flex; align-items: center; padding: 0 18px 1px 8px; gap: 31px; }
.sel svg { width: 28px; height: 28px; }
.node input { appearance: none; width: 28px; height: 28px; border: 2px solid #555; border-radius: 50%; background: radial-gradient(circle, #222 5px, transparent 6px), linear-gradient(#aab4c8, #fff); margin-left: -3px; }
.hatch { position: absolute; left: 48px; right: 4px; bottom: 3px; height: 8px; background: repeating-linear-gradient(125deg, #7b90b2 0 4px, transparent 5px 10px); }

.center { position: relative; display: flex; flex-direction: column; justify-content: space-between; align-items: center; padding-bottom: 12px; }
.scene { width: 560px; height: 972px; }
.tip { position: absolute; left: 313px; top: 275px; white-space: nowrap; background: #ececec; color: #000; border: 2px solid #aaa; border-top-color: #8c8c8c; padding: 2px 12px 1px 8px; font: 25px/33px Inter, "Liberation Sans", sans-serif; box-shadow: 0 14px 36px rgba(0, 0, 0, .3); z-index: 2; }
.hud { position: absolute; left: 512px; top: 354px; height: 44px; width: 224px; background: #f1f1f1; display: flex; align-items: center; }
.hud i { width: 6px; height: 40px; margin: 0 26px 0 10px; background: repeating-linear-gradient(160deg, #ccc 0 2px, transparent 2px 6px); }
.hud label { width: 160px; height: 44px; background: #e6d8e4; border-radius: 5px; padding: 5px 6px; }
.hud input { display: block; width: 148px; height: 34px; border: 2px solid #b8b4ba; outline: 0; padding: 0 9px 2px; background: linear-gradient(#dfc3de, #dfc3de) 8px 2px / 126px 26px no-repeat #fff; color: #000; }
.hud svg { width: 12px; height: 9px; margin-left: 4px; }
.navbar { width: 506px; height: 48px; background: #f1f1f1; display: flex; align-items: center; padding: 0 8px; gap: 20px; }
.nav { display: flex; align-items: center; }
.nav.menu { gap: 8px; margin-right: -6px; }
.nav.wide { margin-left: 12px; }
.nav.wide, .nav.wide ~ .nav { gap: 5px; }
.nav svg { width: 32px; height: 34px; }
.nav .dd { width: 12px; height: 9px; }

.right { display: flex; flex-direction: column; align-items: flex-end; padding: 42px 9px 15px 0; }
.viewcube { width: 190px; height: 190px; margin: 0 21px 16px 0; }
.dialog { width: 499px; }
.dialog-head { height: 48px; background: #f1f1f1; border: 1px solid #ccc; border-width: 1px 2px 2px 1px; display: flex; align-items: center; color: #666; }
.dialog-head h2 { flex: 1; padding-left: 8px; }
.grip.left { margin: 0 14px 0 3px; border-width: 0 2px; }
.ff { transform: rotate(180deg); margin: 0 7px 0 0; }
.rows { background: #f1f1f1; border: 2px solid #ccc; border-width: 0 2px; padding: 2px 0 3px; }
.row { height: 60px; display: flex; align-items: center; padding-left: 24px; }
.row label { width: 157px; padding-bottom: 1px; }
.picked { width: 162px; height: 54px; background: #0696d7; color: #fff; display: flex; align-items: center; gap: 12px; padding: 0 0 2px 13px; }
.picked svg { width: 20px; height: 28px; }
.clear { margin-left: 22px; color: #555; }
.clear svg { width: 18px; height: 18px; }
.drop { position: relative; width: 287px; height: 54px; }
.drop select { appearance: none; width: 100%; height: 54px; border: 2px solid #ccc; border-radius: 0; background: #fff; padding: 0 30px 1px 44px; }
.lead { position: absolute; left: 8px; top: 11px; width: 32px; height: 32px; }
.row .dd { width: 12px; height: 8px; color: #333; margin-left: 5px; }
.drop .dd { position: absolute; right: 10px; top: 23px; margin: 0; }
.row input { width: 247px; height: 42px; border: 2px solid #ccc; padding: 0 5px 2px; margin-left: 13px; outline: 0; }
hr { height: 6px; background: #c0c0c0; border: 0; margin: 8px 26px 5px 2px; }
.dialog-foot { height: 73px; background: #f1f1f1; border: 2px solid #ccc; display: flex; align-items: center; gap: 12px; padding: 0 9px 0 16px; }
.info { width: 24px; height: 24px; margin-right: auto; }
.dialog-foot button { width: 120px; height: 38px; border: 2px solid #bbb; background: #e8e8e8; color: #666; font-size: 24px; line-height: 32px; }
.status { margin-top: auto; padding-right: 59px; font-size: 23px; font-weight: 700; line-height: 36px; color: #333; }

/* timeline */
.timeline { height: 100px; background: #f1f1f1; border-top: 2px solid #ccc; display: flex; padding: 22px 26px 0 21px; }
.playback { display: flex; gap: 24px; height: 52px; }
.playback svg { width: 26px; height: 32px; }
.track { position: relative; margin-left: 37px; }
.features { display: flex; }
.feature { width: 48px; height: 48px; display: flex; align-items: center; justify-content: center; position: relative; }
.feature svg { width: 32px; height: 32px; }
.feature.on { background: #0696d7; border-radius: 4px; }
.feature::after { content: ""; position: absolute; left: 24px; top: 46px; width: 4px; height: 12px; background: #ccc; }
.rail { height: 4px; background: #ccc; margin: 8px 20px 0 24px; }
.marker { position: absolute; right: -12px; top: -4px; width: 24px; height: 64px; }
.settings { margin-left: auto; height: 52px; }
.settings svg { width: 32px; height: 32px; }
</style>
